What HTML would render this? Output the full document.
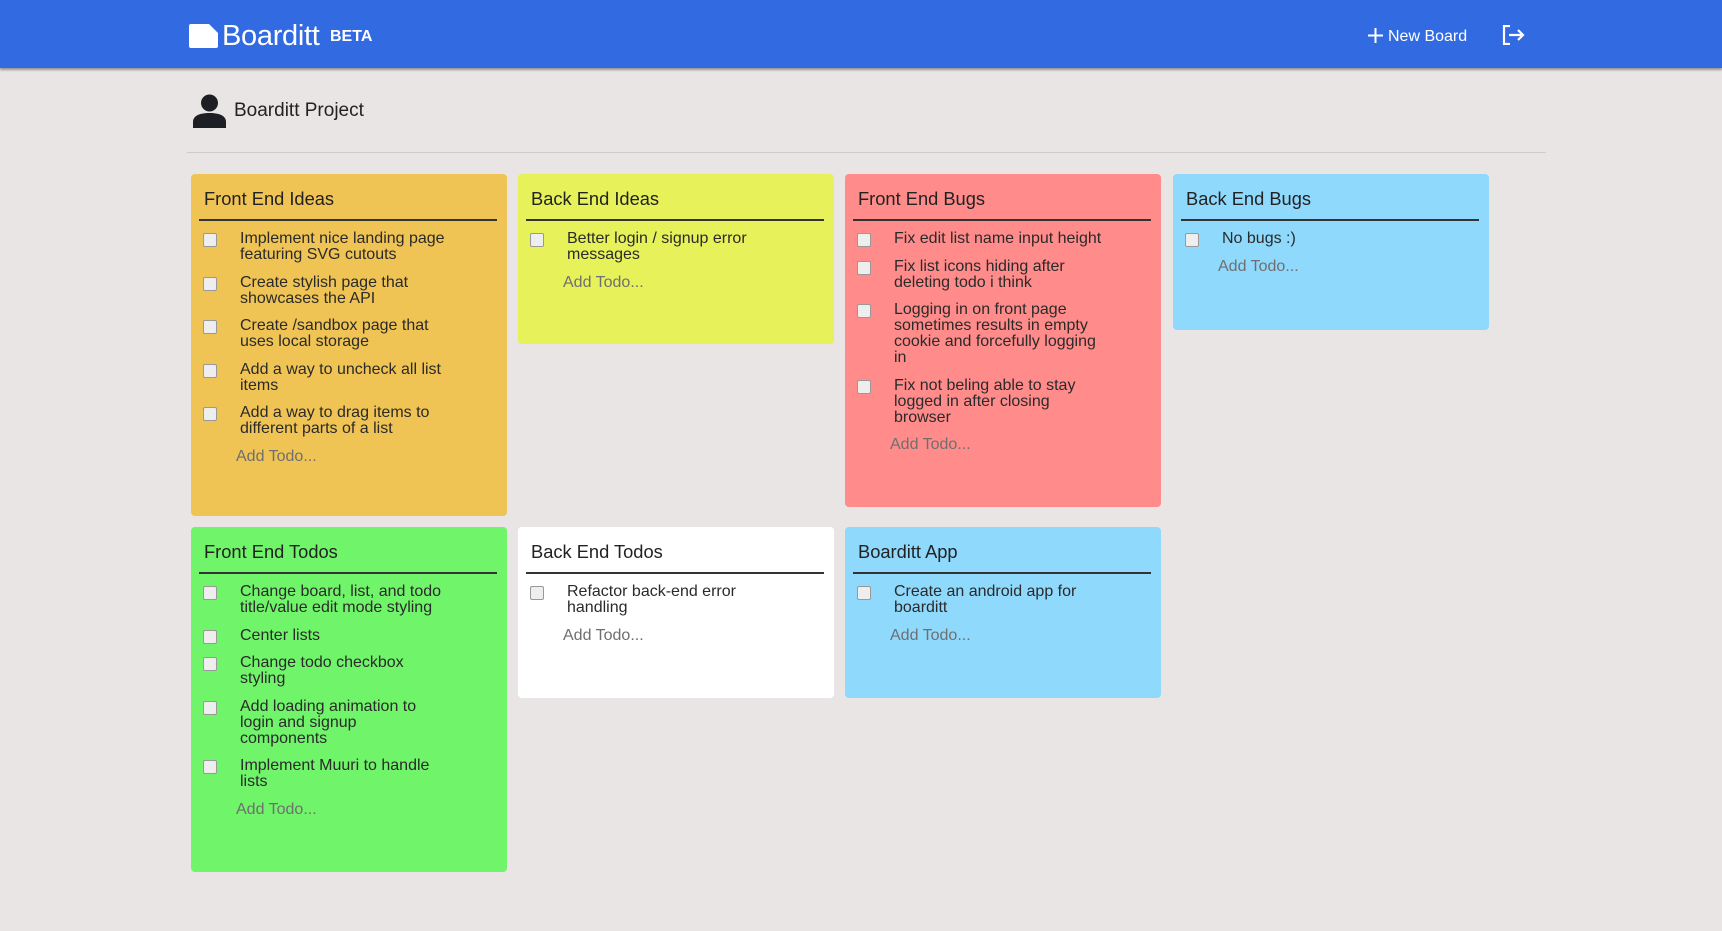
<!DOCTYPE html>
<html><head><meta charset="utf-8"><style>
*{box-sizing:border-box;margin:0;padding:0}
body{width:1722px;height:931px;background:#e9e5e4;font-family:"Liberation Sans",sans-serif;color:#2a2a2a;position:relative;overflow:hidden}
.hdr{position:absolute;left:0;top:0;width:1722px;height:68px;background:#326ae2;box-shadow:0 2px 2px rgba(0,0,0,.35)}
.logo{position:absolute;left:222px;top:20px;color:#fff;font-size:29px;letter-spacing:-0.3px}
.beta{position:absolute;left:330px;top:28px;color:#fff;font-size:16px;font-weight:bold}
.nb{position:absolute;left:1388px;top:28px;color:#fff;font-size:16px}
.proj{position:absolute;left:234px;top:100px;font-size:19px;color:#222}
.div{position:absolute;left:187px;top:152px;width:1359px;height:1px;background:#cfcbca}
.card{position:absolute;width:316px;border-radius:4px;padding:13px 10px 0 8px}
.t{font-size:18.3px;line-height:24px;padding-left:5px;padding-bottom:8px;border-bottom:2px solid #333;margin-bottom:10px;color:#222}
.it{position:relative;padding-left:41px;margin-bottom:11.5px;line-height:16px;font-size:16px;white-space:nowrap}
.it:before{content:"";position:absolute;left:4px;top:2px;width:12px;height:12px;border:1px solid #999;background:#eee;border-radius:2px}
.add{padding-left:37px;font-size:16px;line-height:16px;color:#6f6f6f;margin-top:8px}
</style></head><body>
<div class="hdr">
<svg style="position:absolute;left:189px;top:24px" width="29" height="24" viewBox="0 0 29 24"><path d="M2 0H20L29 9V22a2 2 0 0 1-2 2H2a2 2 0 0 1-2-2V2a2 2 0 0 1 2-2z" fill="#fff"/></svg>
<div class="logo">Boarditt</div><div class="beta">BETA</div>
<svg style="position:absolute;left:1368px;top:28px" width="15" height="15" viewBox="0 0 15 15"><path d="M7.5 0V15M0 7.5H15" stroke="#fff" stroke-width="2"/></svg>
<div class="nb">New Board</div>
<svg style="position:absolute;left:1502px;top:25px" width="24" height="20" viewBox="0 0 24 20"><path d="M8 1H2V19H8" stroke="#fff" stroke-width="2.2" fill="none"/><path d="M7 10H21M16 5L21 10L16 15" stroke="#fff" stroke-width="2.2" fill="none"/></svg>
</div>
<svg style="position:absolute;left:193px;top:94px" width="33" height="34" viewBox="0 0 33 34"><circle cx="16.5" cy="9" r="8.5" fill="#1e1f24"/><path d="M0 34V28C0 22 6 19 16.5 19S33 22 33 28V34z" fill="#1e1f24"/></svg>
<div class="proj">Boarditt Project</div>
<div class="div"></div>

<div class="card" style="left:191px;top:174px;height:342px;background:#f0c454">
<div class="t">Front End Ideas</div>
<div class="it">Implement nice landing page<br>featuring SVG cutouts</div>
<div class="it">Create stylish page that<br>showcases the API</div>
<div class="it">Create /sandbox page that<br>uses local storage</div>
<div class="it">Add a way to uncheck all list<br>items</div>
<div class="it">Add a way to drag items to<br>different parts of a list</div>
<div class="add">Add Todo...</div>
</div>
<div class="card" style="left:518px;top:174px;height:170px;background:#e7f15a">
<div class="t">Back End Ideas</div>
<div class="it">Better login / signup error<br>messages</div>
<div class="add">Add Todo...</div>
</div>
<div class="card" style="left:845px;top:174px;height:333px;background:#ff8b8a">
<div class="t">Front End Bugs</div>
<div class="it">Fix edit list name input height</div>
<div class="it">Fix list icons hiding after<br>deleting todo i think</div>
<div class="it">Logging in on front page<br>sometimes results in empty<br>cookie and forcefully logging<br>in</div>
<div class="it">Fix not beling able to stay<br>logged in after closing<br>browser</div>
<div class="add">Add Todo...</div>
</div>
<div class="card" style="left:1173px;top:174px;height:156px;background:#8fd9fd">
<div class="t">Back End Bugs</div>
<div class="it">No bugs :)</div>
<div class="add">Add Todo...</div>
</div>

<div class="card" style="left:191px;top:527px;height:345px;background:#70f46a">
<div class="t">Front End Todos</div>
<div class="it">Change board, list, and todo<br>title/value edit mode styling</div>
<div class="it">Center lists</div>
<div class="it">Change todo checkbox<br>styling</div>
<div class="it">Add loading animation to<br>login and signup<br>components</div>
<div class="it">Implement Muuri to handle<br>lists</div>
<div class="add">Add Todo...</div>
</div>
<div class="card" style="left:518px;top:527px;height:171px;background:#fff">
<div class="t">Back End Todos</div>
<div class="it">Refactor back-end error<br>handling</div>
<div class="add">Add Todo...</div>
</div>
<div class="card" style="left:845px;top:527px;height:171px;background:#8fd9fd">
<div class="t">Boarditt App</div>
<div class="it">Create an android app for<br>boarditt</div>
<div class="add">Add Todo...</div>
</div>
</body></html>
